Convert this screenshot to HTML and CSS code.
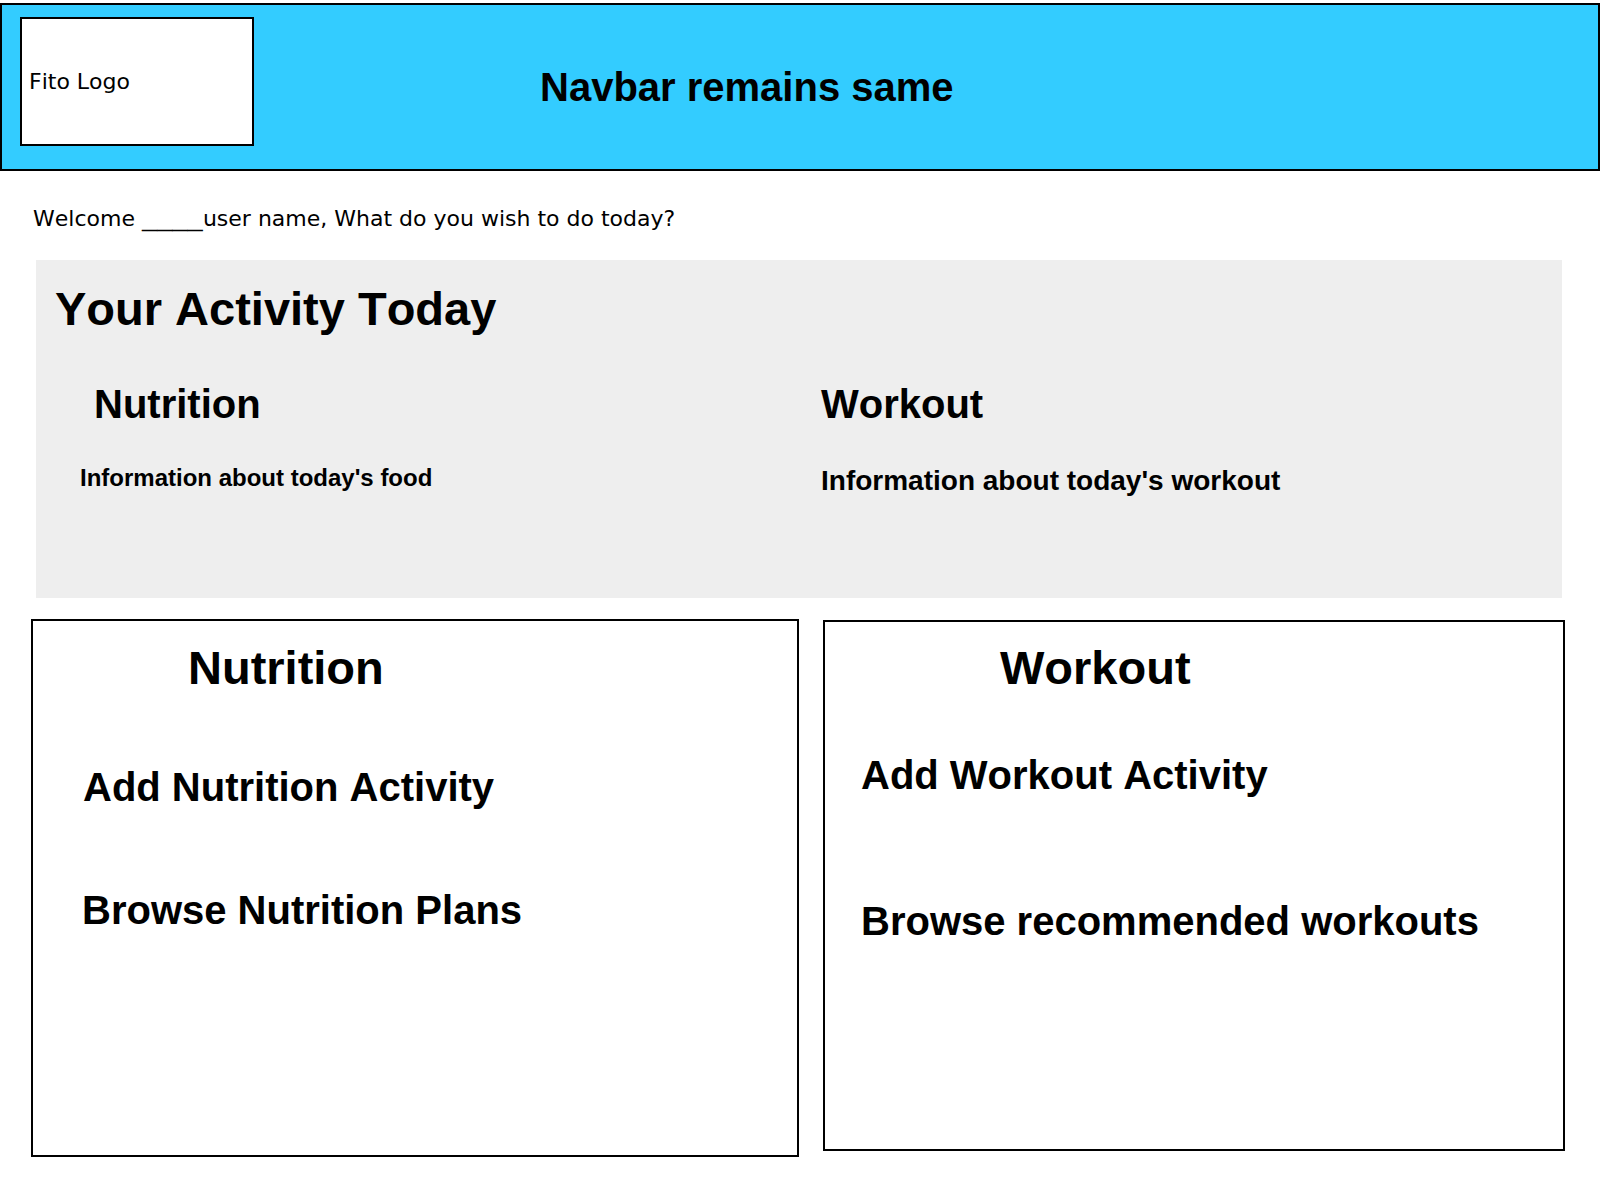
FILE: index.html
```html
<!DOCTYPE html>
<html lang="en">
<head>
<meta charset="utf-8">
<title>Fito Dashboard</title>
<link rel="stylesheet" href="styles.css">
</head>
<body>
<header class="navbar">
  <div class="logo"><span class="logo-text">Fito Logo</span></div>
  <div class="nav-title">Navbar remains same</div>
</header>

<p class="welcome">Welcome <span class="blank">____</span>user name, What do you wish to do today?</p>

<section class="activity">
  <h1 class="activity-title">Your Activity Today</h1>
  <div class="activity-cols">
    <div class="col col-nutrition">
      <h2 class="col-heading col-heading-nutrition">Nutrition</h2>
      <p class="col-info col-info-nutrition">Information about today's food</p>
    </div>
    <div class="col col-workout">
      <h2 class="col-heading">Workout</h2>
      <p class="col-info col-info-workout">Information about today's workout</p>
    </div>
  </div>
</section>

<section class="cards">
  <div class="card card-nutrition">
    <h2 class="card-title">Nutrition</h2>
    <p class="card-link link-add">Add Nutrition Activity</p>
    <p class="card-link link-browse">Browse Nutrition Plans</p>
  </div>
  <div class="card card-workout">
    <h2 class="card-title">Workout</h2>
    <p class="card-link link-add">Add Workout Activity</p>
    <p class="card-link link-browse">Browse recommended workouts</p>
  </div>
</section>
</body>
</html>
```
FILE: styles.css
```css
* { box-sizing: border-box; }

html, body {
  margin: 0;
  padding: 0;
  background: #ffffff;
  color: #000000;
}

body {
  font-family: "Liberation Sans", Arial, sans-serif;
  font-kerning: none;
  width: 1600px;
  height: 1200px;
  overflow: hidden;
}

h1, h2, p { margin: 0; }

/* ---------- Navbar ---------- */
.navbar {
  margin-top: 3px;
  height: 168px;
  border: 2px solid #000;
  background: #33ccff;
  display: flex;
  align-items: center;
  padding: 0 0 0 18px;
}

.logo {
  align-self: flex-start;
  margin-top: 12px;
  width: 234px;
  height: 129px;
  background: #fff;
  border: 2px solid #000;
  display: flex;
  align-items: center;
  padding-left: 7px;
}

.logo-text {
  font-family: "DejaVu Sans", sans-serif;
  font-size: 22px;
  line-height: 1;
}

.nav-title {
  margin-left: 286px;
  font-size: 40px;
  line-height: 1;
  font-weight: bold;
}

/* ---------- Welcome ---------- */
.welcome {
  margin-top: 36px;
  padding-left: 33px;
  font-family: "DejaVu Sans", sans-serif;
  font-size: 22px;
  line-height: 24px;
}

.blank {
  display: inline-block;
  transform: scaleX(1.38);
  transform-origin: left center;
  margin-right: 17px;
}

/* ---------- Activity panel ---------- */
.activity {
  margin: 29px 0 0 36px;
  width: 1526px;
  height: 338px;
  background: #eeeeee;
  padding: 26px 0 0 19px;
}

.activity-title {
  font-size: 47px;
  line-height: 46px;
  font-weight: bold;
}

.activity-cols {
  display: grid;
  grid-template-columns: 741px 1fr;
  margin-top: 52px;
  padding-left: 25px;
}

.col-heading {
  font-size: 40px;
  line-height: 1;
  font-weight: bold;
}

.col-heading-nutrition {
  margin-left: 14px;
}

.col-info {
  font-weight: bold;
  line-height: 1;
}

.col-info-nutrition {
  margin-top: 42px;
  font-size: 24px;
}

.col-info-workout {
  margin-top: 43px;
  font-size: 28px;
}

/* ---------- Cards ---------- */
.cards {
  display: flex;
  align-items: flex-start;
  gap: 24px;
  margin-top: 21px;
  padding-left: 31px;
}

.card {
  border: 2px solid #000;
  background: #fff;
}

.card-nutrition {
  width: 768px;
  height: 538px;
  padding: 23px 0 0 50px;
}

.card-workout {
  margin-top: 1px;
  width: 742px;
  height: 531px;
  padding: 22px 0 0 36px;
}

.card-title {
  font-size: 47px;
  line-height: 1;
  font-weight: bold;
}

.card-nutrition .card-title { margin-left: 105px; }
.card-workout .card-title { margin-left: 139px; }

.card-link {
  font-size: 40px;
  line-height: 1;
  font-weight: bold;
}

.card-nutrition .link-add { margin-top: 76px; }
.card-nutrition .link-browse { margin-top: 83px; margin-left: -1px; }

.card-workout .link-add { margin-top: 64px; }
.card-workout .link-browse { margin-top: 106px; }
```
